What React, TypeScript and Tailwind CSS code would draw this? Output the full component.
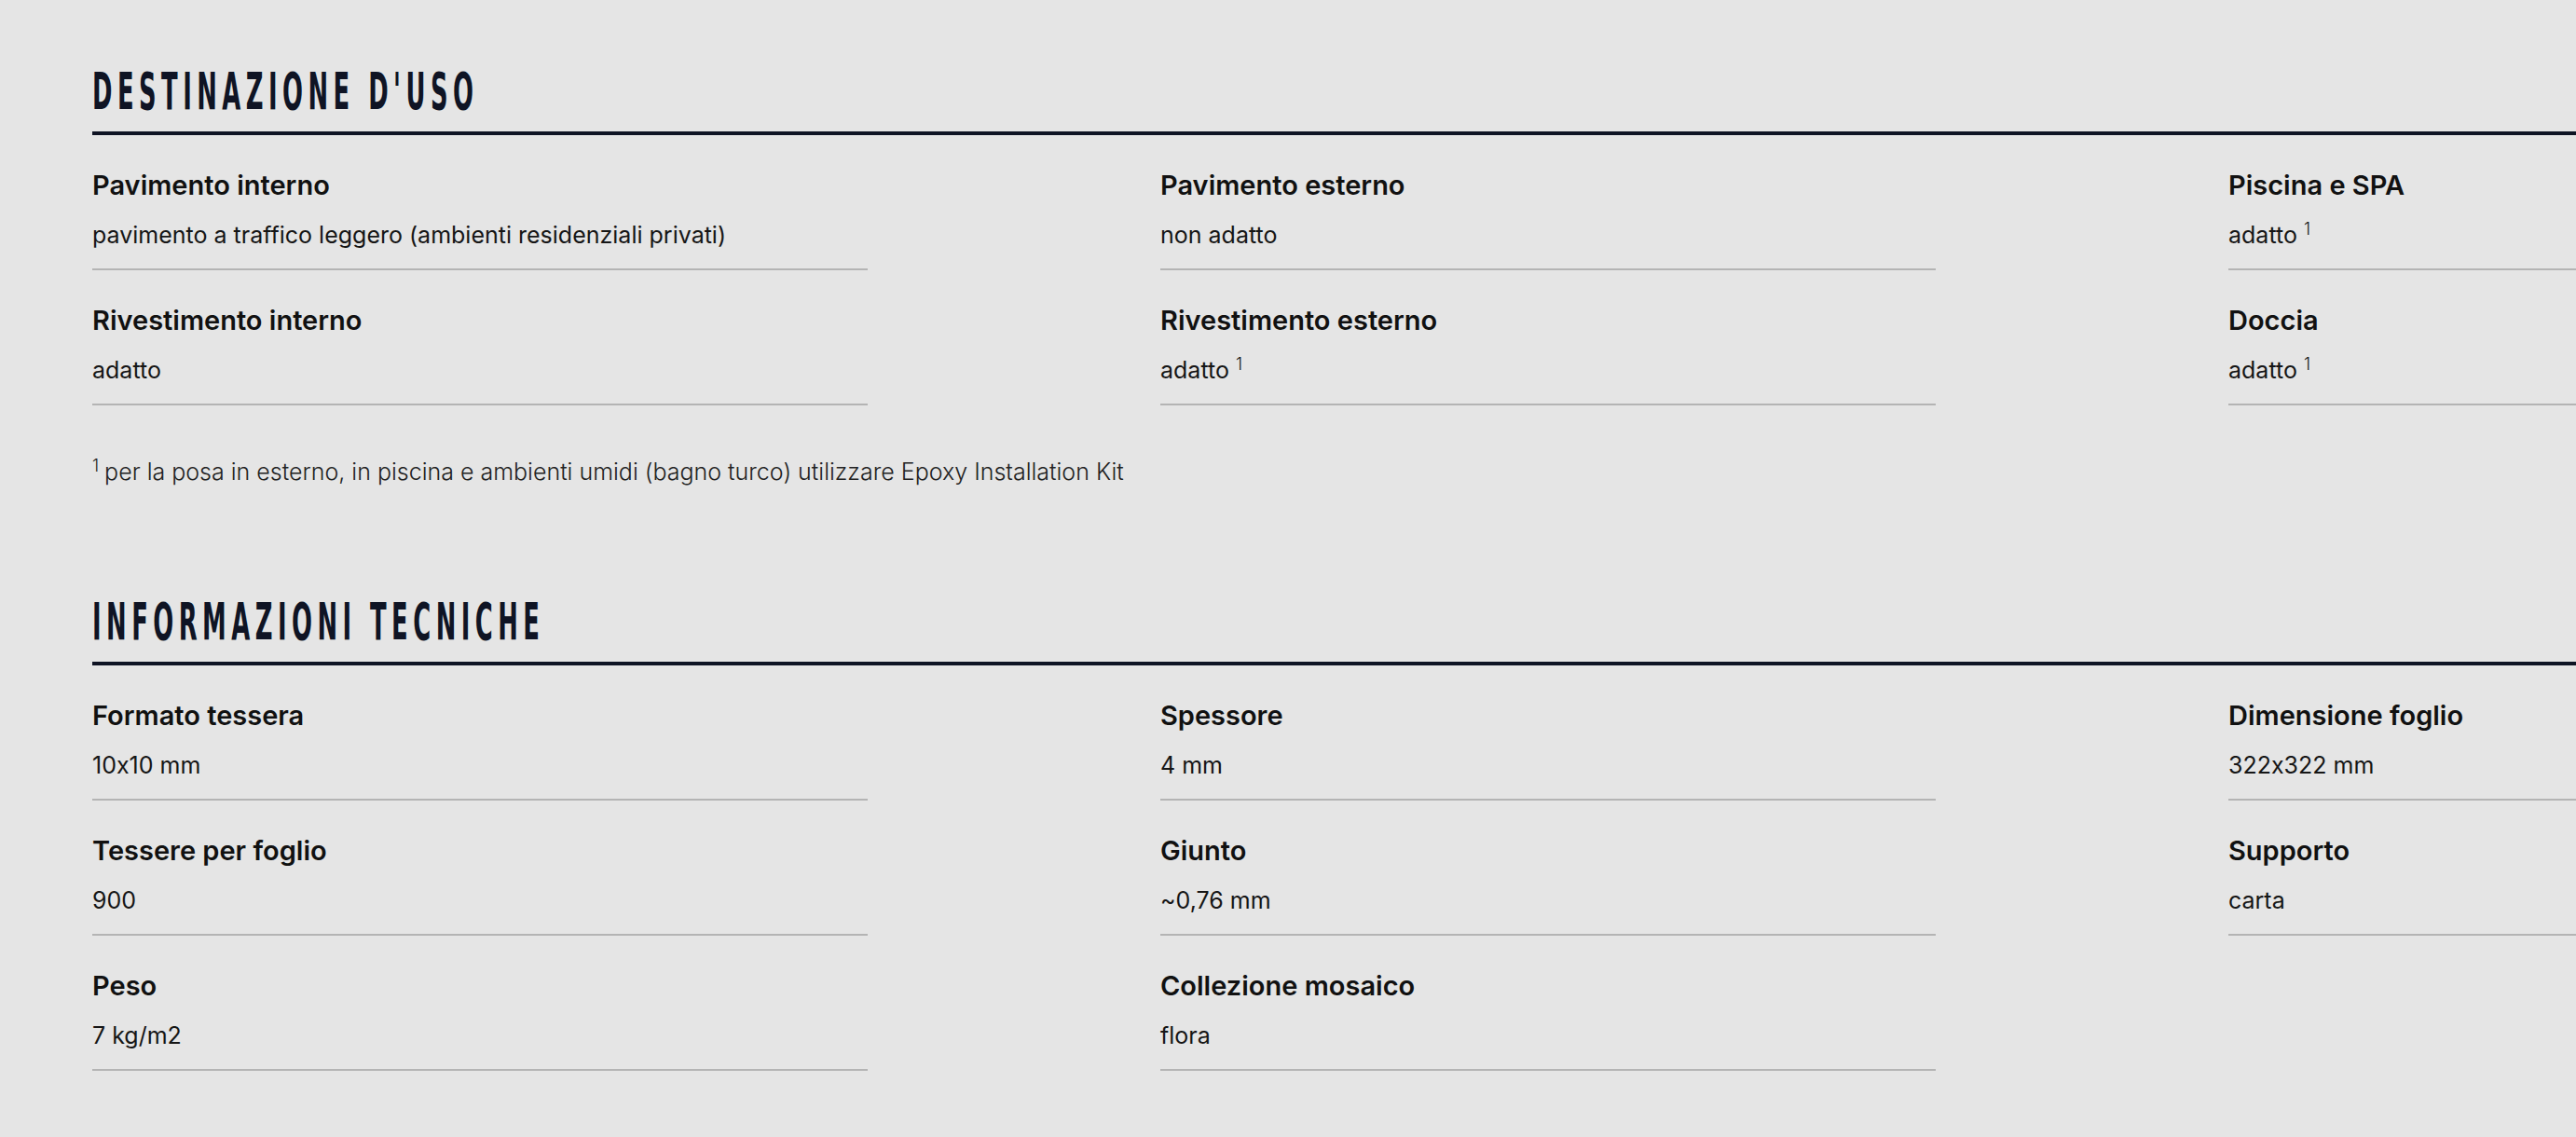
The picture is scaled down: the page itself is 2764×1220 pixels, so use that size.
import React from "react";

type Item = { label: string; value: string; note?: boolean };

const usoItems: Item[] = [
    { label: "Pavimento interno", value: "pavimento a traffico leggero (ambienti residenziali privati)" },
    { label: "Pavimento esterno", value: "non adatto" },
    { label: "Piscina e SPA", value: "adatto", note: true },
    { label: "Rivestimento interno", value: "adatto" },
    { label: "Rivestimento esterno", value: "adatto", note: true },
    { label: "Doccia", value: "adatto", note: true },
];

const tecnicheItems: Item[] = [
    { label: "Formato tessera", value: "10x10 mm" },
    { label: "Spessore", value: "4 mm" },
    { label: "Dimensione foglio", value: "322x322 mm" },
    { label: "Tessere per foglio", value: "900" },
    { label: "Giunto", value: "~0,76 mm" },
    { label: "Supporto", value: "carta" },
    { label: "Peso", value: "7 kg/m2" },
    { label: "Collezione mosaico", value: "flora" },
];

const SectionTitle: React.FC<{ title: string }> = ({ title }) => (
    <div>
        <h2 className="h-[54px] overflow-visible whitespace-nowrap text-[56px] leading-[54px] font-bold tracking-[0.19em] text-[#0f1424] [font-family:'DejaVu_Sans_Condensed','DejaVu_Sans',sans-serif]">
            <span className="inline-block origin-left scale-x-[0.513]">{title}</span>
        </h2>
        <div className="mt-[16px] h-[4px] w-full bg-[#0f1424]" />
    </div>
);

const InfoGrid: React.FC<{ items: Item[] }> = ({ items }) => (
    <div className="grid grid-cols-[832px_832px_832px] gap-x-[314px] gap-y-[36px] pt-[36px]">
        {items.map((item) => (
            <div key={item.label} className="border-b-2 border-[#b4b4b4] pb-[20px]">
                <div className="text-[29px] leading-[36px] font-semibold text-[#111111]">{item.label}</div>
                <div className="mt-[19px] text-[25px] leading-[32px] text-[#161616]">
                    {item.value}
                    {item.note && <sup className="ml-[7px] text-[18px] font-light">1</sup>}
                </div>
            </div>
        ))}
    </div>
);

const App: React.FC = () => {
    return (
        <div className="min-h-screen w-full overflow-hidden bg-[#e5e5e5] [font-family:Inter,Lato,sans-serif] [font-feature-settings:'calt'_0]">
            <div className="w-[3400px] pl-[99px] pt-[71px] pb-[60px]">
                <SectionTitle title="DESTINAZIONE D'USO" />
                <InfoGrid items={usoItems} />
                <p className="mt-[55px] text-[25px] leading-[32px] font-light text-[#222222]">
                    <sup className="mr-[6px] text-[18px]">1</sup>
                    per la posa in esterno, in piscina e ambienti umidi (bagno turco) utilizzare Epoxy Installation Kit
                </p>
                <div className="mt-[118px]">
                    <SectionTitle title="INFORMAZIONI TECNICHE" />
                    <InfoGrid items={tecnicheItems} />
                </div>
            </div>
        </div>
    );
};

export default App;
